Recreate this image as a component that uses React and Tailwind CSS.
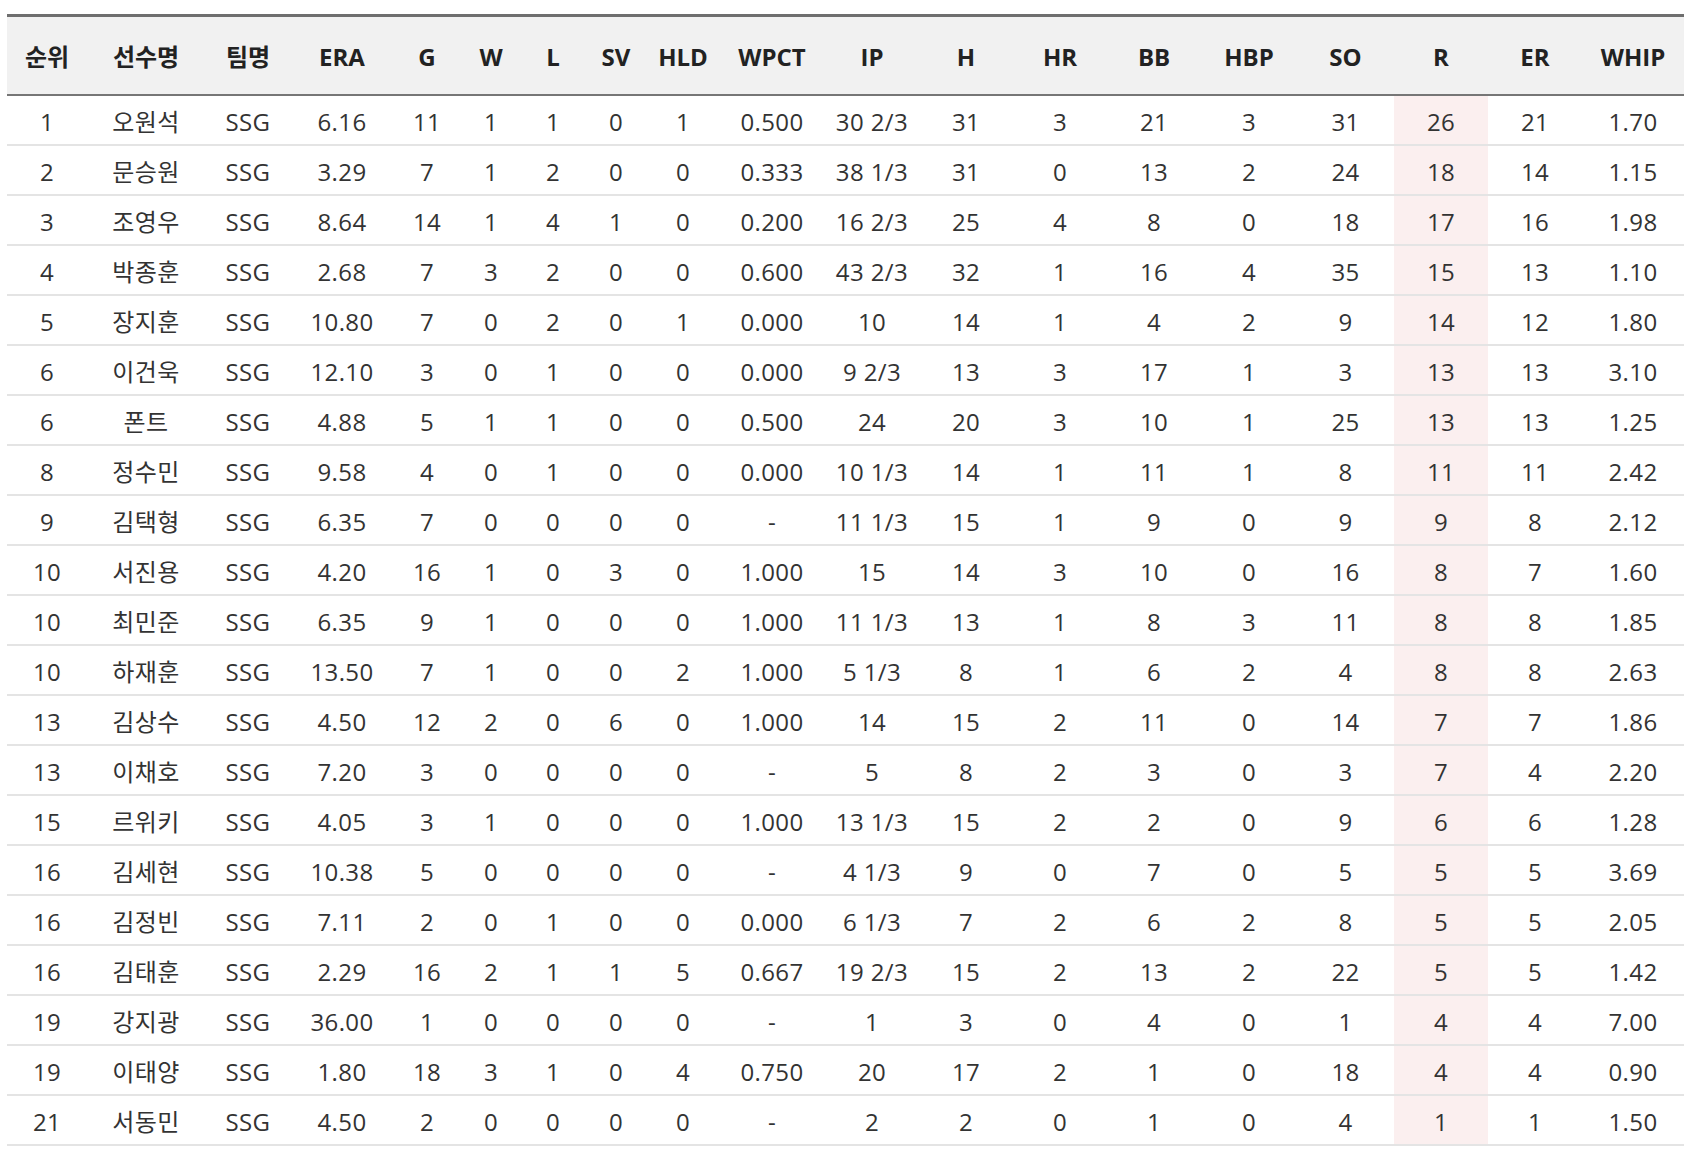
import React from 'react'

const columns = [
  { label: '순위', w: 'w-[80px]' },
  { label: '선수명', w: 'w-[118px]' },
  { label: '팀명', w: 'w-[86px]' },
  { label: 'ERA', w: 'w-[102px]' },
  { label: 'G', w: 'w-[68px]' },
  { label: 'W', w: 'w-[60px]' },
  { label: 'L', w: 'w-[64px]' },
  { label: 'SV', w: 'w-[62px]' },
  { label: 'HLD', w: 'w-[72px]' },
  { label: 'WPCT', w: 'w-[106px]' },
  { label: 'IP', w: 'w-[94px]' },
  { label: 'H', w: 'w-[94px]' },
  { label: 'HR', w: 'w-[94px]' },
  { label: 'BB', w: 'w-[94px]' },
  { label: 'HBP', w: 'w-[96px]' },
  { label: 'SO', w: 'w-[97px]' },
  { label: 'R', w: 'w-[94px]' },
  { label: 'ER', w: 'w-[94px]' },
  { label: 'WHIP', w: 'w-[102px]' },
]

const rows = [
  ['1', '오원석', 'SSG', '6.16', '11', '1', '1', '0', '1', '0.500', '30 2/3', '31', '3', '21', '3', '31', '26', '21', '1.70'],
  ['2', '문승원', 'SSG', '3.29', '7', '1', '2', '0', '0', '0.333', '38 1/3', '31', '0', '13', '2', '24', '18', '14', '1.15'],
  ['3', '조영우', 'SSG', '8.64', '14', '1', '4', '1', '0', '0.200', '16 2/3', '25', '4', '8', '0', '18', '17', '16', '1.98'],
  ['4', '박종훈', 'SSG', '2.68', '7', '3', '2', '0', '0', '0.600', '43 2/3', '32', '1', '16', '4', '35', '15', '13', '1.10'],
  ['5', '장지훈', 'SSG', '10.80', '7', '0', '2', '0', '1', '0.000', '10', '14', '1', '4', '2', '9', '14', '12', '1.80'],
  ['6', '이건욱', 'SSG', '12.10', '3', '0', '1', '0', '0', '0.000', '9 2/3', '13', '3', '17', '1', '3', '13', '13', '3.10'],
  ['6', '폰트', 'SSG', '4.88', '5', '1', '1', '0', '0', '0.500', '24', '20', '3', '10', '1', '25', '13', '13', '1.25'],
  ['8', '정수민', 'SSG', '9.58', '4', '0', '1', '0', '0', '0.000', '10 1/3', '14', '1', '11', '1', '8', '11', '11', '2.42'],
  ['9', '김택형', 'SSG', '6.35', '7', '0', '0', '0', '0', '-', '11 1/3', '15', '1', '9', '0', '9', '9', '8', '2.12'],
  ['10', '서진용', 'SSG', '4.20', '16', '1', '0', '3', '0', '1.000', '15', '14', '3', '10', '0', '16', '8', '7', '1.60'],
  ['10', '최민준', 'SSG', '6.35', '9', '1', '0', '0', '0', '1.000', '11 1/3', '13', '1', '8', '3', '11', '8', '8', '1.85'],
  ['10', '하재훈', 'SSG', '13.50', '7', '1', '0', '0', '2', '1.000', '5 1/3', '8', '1', '6', '2', '4', '8', '8', '2.63'],
  ['13', '김상수', 'SSG', '4.50', '12', '2', '0', '6', '0', '1.000', '14', '15', '2', '11', '0', '14', '7', '7', '1.86'],
  ['13', '이채호', 'SSG', '7.20', '3', '0', '0', '0', '0', '-', '5', '8', '2', '3', '0', '3', '7', '4', '2.20'],
  ['15', '르위키', 'SSG', '4.05', '3', '1', '0', '0', '0', '1.000', '13 1/3', '15', '2', '2', '0', '9', '6', '6', '1.28'],
  ['16', '김세현', 'SSG', '10.38', '5', '0', '0', '0', '0', '-', '4 1/3', '9', '0', '7', '0', '5', '5', '5', '3.69'],
  ['16', '김정빈', 'SSG', '7.11', '2', '0', '1', '0', '0', '0.000', '6 1/3', '7', '2', '6', '2', '8', '5', '5', '2.05'],
  ['16', '김태훈', 'SSG', '2.29', '16', '2', '1', '1', '5', '0.667', '19 2/3', '15', '2', '13', '2', '22', '5', '5', '1.42'],
  ['19', '강지광', 'SSG', '36.00', '1', '0', '0', '0', '0', '-', '1', '3', '0', '4', '0', '1', '4', '4', '7.00'],
  ['19', '이태양', 'SSG', '1.80', '18', '3', '1', '0', '4', '0.750', '20', '17', '2', '1', '0', '18', '4', '4', '0.90'],
  ['21', '서동민', 'SSG', '4.50', '2', '0', '0', '0', '0', '-', '2', '2', '0', '1', '0', '4', '1', '1', '1.50'],
]

// R column is the sorted one, so it gets the tint
const SORTED_COL = 16

const App = () => {
  return (
    <div className="min-h-screen bg-white pt-[14px] pl-[7px] font-['Open_Sans','Noto_Sans_CJK_KR',sans-serif] text-[#333]">
      <table className="w-[1677px] table-fixed border-collapse">
        <thead>
          <tr className="h-[79px] border-t-[3px] border-b-[2px] border-t-[#6e6e6e] border-b-[#767676] bg-[#f1f1f1]">
            {columns.map((col) => (
              <th
                key={col.label}
                className={`${col.w} p-0 pt-[4px] text-center text-[24px] font-bold leading-none text-[#222]`}
              >
                {col.label}
              </th>
            ))}
          </tr>
        </thead>
        <tbody>
          {rows.map((row, i) => (
            <tr key={i} className="h-[50px] border-b-[2px] border-[#e4e4e4]">
              {row.map((cell, j) => (
                <td
                  key={j}
                  className={`p-0 pt-[4px] text-center text-[24px] leading-none tracking-[0.4px] ${
                    j === SORTED_COL ? 'bg-[#fbefef]' : ''
                  }`}
                >
                  {cell}
                </td>
              ))}
            </tr>
          ))}
        </tbody>
      </table>
    </div>
  )
}

export default App
